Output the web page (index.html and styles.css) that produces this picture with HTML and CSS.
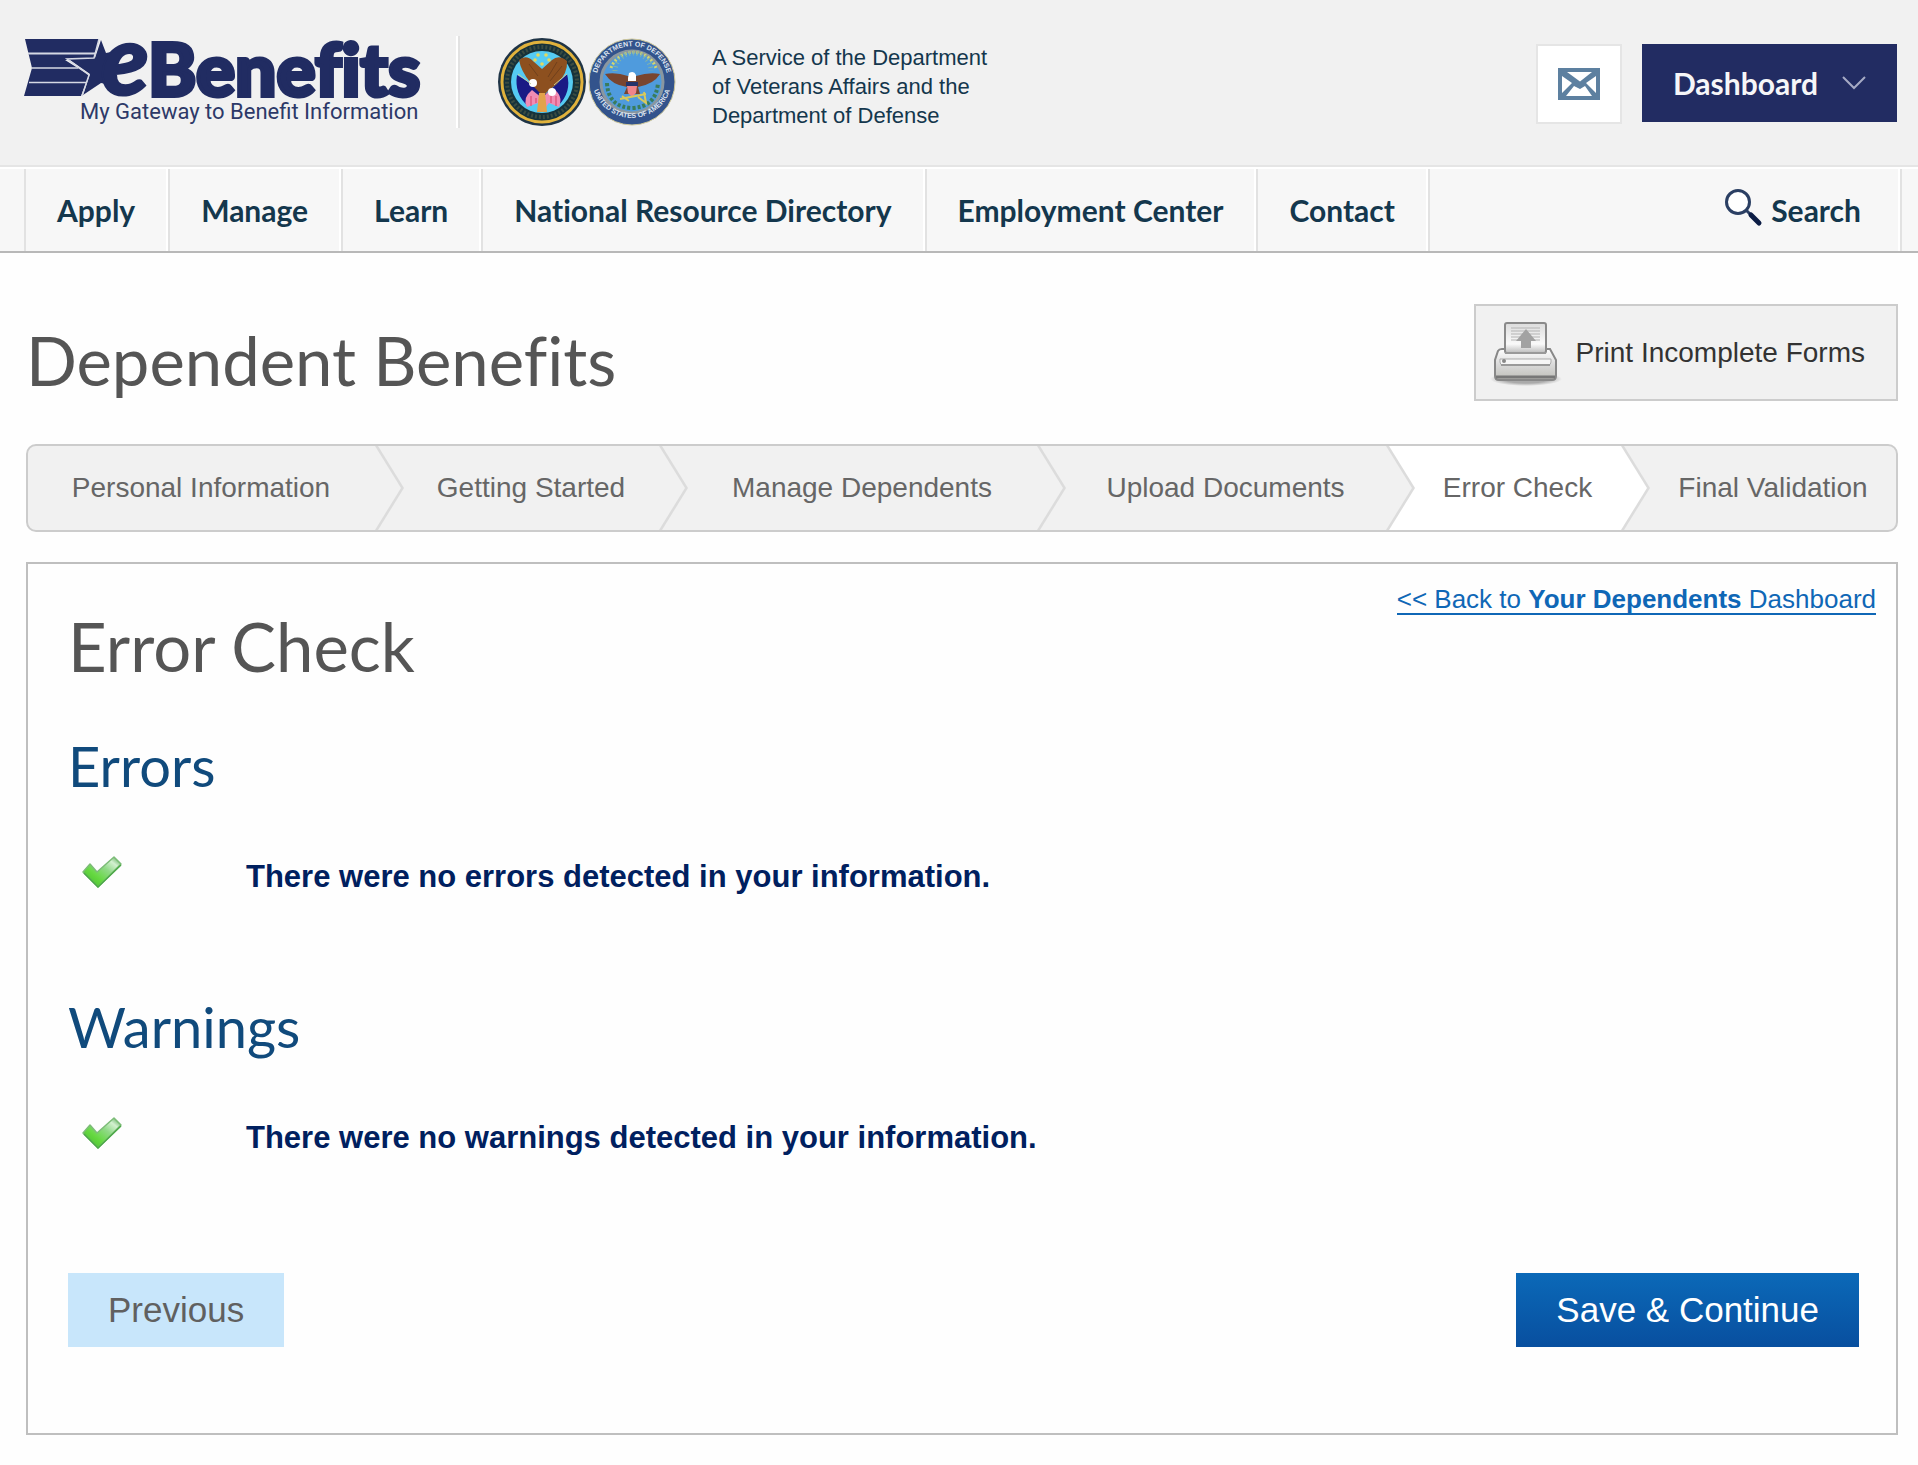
FILE: index.html
```html
<!DOCTYPE html>
<html lang="en">
<head>
<meta charset="utf-8">
<title>eBenefits - Dependent Benefits</title>
<meta name="viewport" content="width=device-width, initial-scale=1">
<link rel="stylesheet" href="styles.css">
</head>
<body>
<header class="masthead">
  <a class="logo" href="#" aria-label="eBenefits home">
    <svg width="400" height="96" viewBox="0 0 400 96">
      <g fill="#212c62">
        <path d="M1 3H75L70 24H41L65 39L57 60H0L8 32Z"/>
        <path d="M77 4L82 17L92 15L84 32L82 48L77 47L59 59L66 38L46 24L71 22Z"/>
        <text class="logo-e" x="77" y="59">e</text>
        <text class="logo-name" x="124" y="60">Benefits</text>
      </g>
      <g stroke="#d5d8e4" fill="none">
        <path d="M4 17.500H72" stroke-width="2"/>
        <path d="M8 32H54M5 46.500H62" stroke-width="1.500"/>
        <path d="M75 3L70 22L43 23L65 39L58 60" stroke-width="1.500"/>
      </g>
      <text class="logo-tag" x="56" y="83">My Gateway to Benefit Information</text>
    </svg>
  </a>
  <div class="agency">
    <svg class="seals" width="182" height="92" viewBox="0 0 182 92" aria-hidden="true">
      <defs>
        <path id="arcTop" d="M102 58A36 36 0 1 1 170 58"/>
        <path id="arcBottom" d="M96 42A40 40 0 1 0 176 42"/>
      </defs>
      <circle cx="46" cy="46" r="44" fill="#1f3446"/>
      <circle cx="46" cy="46" r="40" fill="#17323a" stroke="#e0b23c" stroke-width="3"/>
      <circle cx="46" cy="46" r="35" fill="none" stroke="#3a4c42" stroke-width="4" stroke-dasharray="2 2"/>
      <circle cx="46" cy="46" r="31" fill="#55cbf3"/>
      <path d="M21 39L39 50L50 58L71 38Q76 56 62 70L48 64L32 70Q18 58 21 39Z" fill="#1a1a85"/>
      <path d="M36 54Q26 62 31 71L42 67L46 76L53 67L63 71Q68 59 56 52L46 62Z" fill="#f08cb4"/>
      <path d="M35 60V70M40 62V67M55 59V67M60 60V70" stroke="#dd5a80" stroke-width="1.500"/>
      <path d="M23 24Q30 18 37 25L46 33L56 24Q63 18 71 25Q72 37 61 48L52 55L47 60L39 52L34 46Q25 35 23 24Z" fill="#8d501f"/>
      <path d="M33 28L42 40M61 26L52 41M66 30L54 45" stroke="#70401c"/>
      <circle cx="37" cy="47" r="4" fill="#fff"/><circle cx="56" cy="56" r="4" fill="#fff"/>
      <path d="M22 38L35 48M71 38L58 49" stroke="#c5cd9a" stroke-width="1"/>
      <path d="M43 57H49L51 76H41Z" fill="#e2a34b"/>
      <g fill="#e4d95c"><circle cx="42" cy="19" r="1.800"/><circle cx="50" cy="19" r="1.800"/><circle cx="39" cy="24" r="1.800"/><circle cx="53" cy="24" r="1.800"/><circle cx="46" cy="28" r="1.800"/></g>
      <circle cx="136" cy="46" r="43" fill="#33538c" stroke="#cfc89a" stroke-width="1"/>
      <circle cx="136" cy="46" r="31" fill="#4f9bdd" stroke="#8a97a0" stroke-width="3"/>
      <text class="seal-text"><textPath href="#arcTop" startOffset="50%">DEPARTMENT OF DEFENSE</textPath></text>
      <text class="seal-text"><textPath href="#arcBottom" startOffset="50%">UNITED STATES OF AMERICA</textPath></text>
      <path d="M115 32A24 24 0 0 1 160 32" fill="none" stroke="#d6d66c" stroke-width="3" stroke-dasharray="2 2"/>
      <path d="M119 35A18 18 0 0 1 155 35" fill="none" stroke="#86b4a4" stroke-width="5" stroke-dasharray="1 3"/>
      <path d="M111 47Q112 71 136 72Q160 71 162 47" fill="none" stroke="#397c5c" stroke-width="4" stroke-dasharray="3 2"/>
      <path d="M109 38Q120 36 132 40H140Q153 36 164 38Q158 48 142 51L144 58H128L131 51Q116 49 109 38Z" fill="#79452f"/>
      <path d="M130 46H142V50H130Z" fill="#25346b"/>
      <path d="M131 50H141L140 57L136 61L132 57Z" fill="#ef858b"/>
      <path d="M132 42L133 37Q138 34 140 39V45H132Z" fill="#fff"/>
      <path d="M124 63L150 58M126 60L133 65M142 61L150 67L148 56" stroke="#d9c95a" stroke-width="2" fill="none"/>
    </svg>
    <p class="agency-text">A Service of the Department<br>of Veterans Affairs and the<br>Department of Defense</p>
  </div>
  <div class="account">
    <a class="mail" href="#" aria-label="Messages">
      <svg width="42" height="32" viewBox="0 0 42 32">
        <path fill="#5d80a0" d="M0 0H42V32H0Z"/>
        <path fill="#fff" d="M9 4H34L22 13.500ZM4 8L14 15L4 25ZM38 8L28 15L38 25ZM16 18L22 21L27 18L34 28H8Z"/>
      </svg>
    </a>
    <button class="dashboard" type="button">Dashboard
      <svg width="24" height="14" viewBox="0 0 24 14" aria-hidden="true"><path d="M1 1L12 12L23 1" fill="none" stroke="#a6aac4" stroke-width="2"/></svg>
    </button>
  </div>
</header>

<nav class="main-nav">
  <ul class="nav-list">
    <li><a href="#">Apply</a></li>
    <li><a href="#">Manage</a></li>
    <li><a href="#">Learn</a></li>
    <li><a href="#">National Resource Directory</a></li>
    <li><a href="#">Employment Center</a></li>
    <li><a href="#">Contact</a></li>
  </ul>
  <a class="search" href="#">
    <svg width="38" height="44" viewBox="0 0 38 44" aria-hidden="true">
      <circle cx="13" cy="14" r="11.500" fill="#fff" stroke="#2b3f63" stroke-width="3"/>
      <path d="M21 22L26 27" stroke="#2b3f63" stroke-width="3"/>
      <path d="M26 27L34 35" stroke="#0c1d45" stroke-width="5" stroke-linecap="round"/>
    </svg>Search</a>
</nav>

<main class="page">
  <div class="title-row">
    <h1>Dependent Benefits</h1>
    <button class="print" type="button">
      <svg width="72" height="66" viewBox="0 0 72 66" aria-hidden="true">
        <defs>
          <linearGradient id="paper" x2="0" y2="1"><stop stop-color="#dcdcdc"/><stop offset=".7" stop-color="#fafafa"/><stop offset="1" stop-color="#bbb"/></linearGradient>
          <linearGradient id="tray" x2="0" y2="1"><stop stop-color="#fff"/><stop offset=".5" stop-color="#dadada"/><stop offset="1" stop-color="#bebeb8"/></linearGradient>
          <radialGradient id="shade"><stop offset=".6" stop-color="#aaa"/><stop offset="1" stop-color="#aaa" stop-opacity="0"/></radialGradient>
        </defs>
        <ellipse cx="36" cy="59" rx="36" ry="7" fill="url(#shade)"/>
        <path d="M12 29H60L66 40V56Q66 60 62 60H9Q5 60 5 56V40L8 31Q9 29 12 29Z" fill="url(#tray)" stroke="#888" stroke-width="2"/>
        <path d="M6 57H65" stroke="#777" stroke-width="3"/>
        <rect x="15" y="3" width="41" height="30" rx="2" fill="url(#paper)" stroke="#8a8a8a" stroke-width="2"/>
        <path d="M21 8H50M21 11H50M21 14H50M21 17H50M21 20H50" stroke="#b3b3b3"/>
        <path d="M36 9L46 21H41V28H31V21H26Z" fill="#a2a2a2"/>
        <path d="M15 33H56" stroke="#999" stroke-width="2"/>
        <path d="M10 39H61V42Q61 45 58 45H13Q10 45 10 42Z" fill="#f6f6f6" stroke="#aaa" stroke-width="1"/>
        <path d="M11 45H60" stroke="#9a9a9a" stroke-width="2"/>
        <circle cx="14" cy="41" r="2" fill="#888"/>
      </svg>
      <span>Print Incomplete Forms</span>
    </button>
  </div>

  <ol class="steps">
    <li>Personal Information</li>
    <li>Getting Started</li>
    <li>Manage Dependents</li>
    <li>Upload Documents</li>
    <li class="current" aria-current="step">Error Check</li>
    <li>Final Validation</li>
  </ol>

  <section class="panel">
    <div class="panel-head">
      <h2>Error Check</h2>
      <a class="back" href="#">&lt;&lt; Back to <b>Your Dependents</b> Dashboard</a>
    </div>
    <h3>Errors</h3>
    <div class="result">
      <svg class="tick" width="40" height="36" viewBox="0 0 40 36" aria-hidden="true">
        <defs><linearGradient id="green" x1="0" y1="1" x2="1" y2="0"><stop stop-color="#3fb52c"/><stop offset=".35" stop-color="#65d840"/><stop offset=".6" stop-color="#8fd986"/><stop offset=".8" stop-color="#d3f0d0"/><stop offset="1" stop-color="#3c9a3a"/></linearGradient></defs>
        <path d="M1 17L8 9L15 17L32 2L39 9L16 32Z" fill="url(#green)" stroke="#7cbc77" stroke-width="1.500" stroke-linejoin="round"/>
        <path d="M2 18L16 32L39 10" fill="none" stroke="#4ba847" stroke-width="1.500"/>
      </svg>
      <p>There were no errors detected in your information.</p>
    </div>
    <h3>Warnings</h3>
    <div class="result">
      <svg class="tick" width="40" height="36" viewBox="0 0 40 36" aria-hidden="true">
        <path d="M1 17L8 9L15 17L32 2L39 9L16 32Z" fill="url(#green)" stroke="#7cbc77" stroke-width="1.500" stroke-linejoin="round"/>
        <path d="M2 18L16 32L39 10" fill="none" stroke="#4ba847" stroke-width="1.500"/>
      </svg>
      <p>There were no warnings detected in your information.</p>
    </div>
    <div class="actions">
      <button class="btn previous" type="button">Previous</button>
      <button class="btn save" type="submit">Save &amp; Continue</button>
    </div>
  </section>
</main>
</body>
</html>
```
FILE: styles.css
```css
* { box-sizing: border-box; }

body {
  margin: 0;
  background: #fefefe;
  color: #333;
  font-family: "Liberation Sans", Arial, sans-serif;
  font-size: 28px;
  font-variant-ligatures: none;
}

h1, h2, h3, p, ul, ol { margin: 0; padding: 0; }
h1, h2, h3 { font-family: Lato, sans-serif; font-weight: normal; }
ul, ol { list-style: none; }
a { color: inherit; text-decoration: none; }
button { font: inherit; border: 0; padding: 0; cursor: pointer; }
svg { display: block; flex: none; overflow: visible; }

/* Masthead */
.masthead {
  display: flex;
  align-items: flex-start;
  padding: 36px 21px 37px 24px;
  background: #f1f1f1;
  border-bottom: 2px solid #e5e5e5;
}
.logo {
  width: 436px;
  height: 92px;
  border-right: 2px solid #e2e2e2;
  box-shadow: inset -2px 0 #fff;
}
.logo-name {
  font: 900 73px Lato, sans-serif;
  font-variant-ligatures: none;
  stroke: #212c62;
  stroke-width: 4px;
}
.logo-e {
  font: italic 900 98px Lato, sans-serif;
  stroke: #212c62;
  stroke-width: 2px;
}
.logo-tag { font: 400 22px Roboto, sans-serif; fill: #2d3968; }
.agency {
  display: flex;
  gap: 34px;
  height: 92px;
  padding-left: 36px;
}
.seal-text {
  font: bold 7px "Liberation Sans", sans-serif;
  fill: #dfe5f0;
  text-anchor: middle;
}
.agency-text {
  padding-top: 7px;
  color: #14374d;
  font-size: 22px;
  line-height: 29px;
  white-space: nowrap;
}
.account { display: flex; gap: 20px; margin: 8px 0 0 auto; }
.mail {
  display: grid;
  place-items: center;
  width: 86px;
  height: 80px;
  background: #fff;
  border: 2px solid #e5e5e5;
}
.dashboard {
  display: flex;
  align-items: center;
  gap: 24px;
  height: 78px;
  padding: 0 31px;
  background: #222c62;
  color: #f6f6f8;
  font: bold 30px Lato, sans-serif;
}

/* Main navigation */
.main-nav {
  display: flex;
  justify-content: space-between;
  padding: 0 16px 0 22px;
  background: #f7f7f7;
  border-top: 2px solid #fff;
  border-bottom: 2px solid #b8b8b8;
  color: #14374d;
  font: bold 30px/82px Lato, sans-serif;
  font-variant-ligatures: none;
}
.nav-list { display: flex; }
.nav-list li, .search {
  border-right: 2px solid #e2e2e2;
  box-shadow: inset -2px 0 #fff;
}
.nav-list li:first-child { border-left: 2px solid #e2e2e2; margin-left: 2px; }
.nav-list a { display: block; padding: 0 33px 0 31px; }
.search { display: flex; align-items: center; gap: 8px; padding-right: 39px; }

/* Page */
.page { padding: 51px 20px 30px 26px; }
.title-row {
  display: flex;
  justify-content: space-between;
  align-items: flex-end;
}
h1, h2 { color: #555; font-size: 67px; line-height: 82px; }
.print {
  display: flex;
  align-items: center;
  gap: 14px;
  height: 97px;
  padding: 0 31px 0 14px;
  background: #f1f1f1;
  border: 2px solid #ccc;
  color: #333;
}

/* Progress steps */
.steps {
  display: grid;
  grid-template-columns: 376fr 284fr 378fr 349fr 235fr 246fr;
  margin-top: 43px;
  overflow: hidden;
  background: #f1f1f1;
  border: 2px solid #ccc;
  border-radius: 10px;
  color: #666;
  line-height: 84px;
  text-align: center;
  white-space: nowrap;
}
.steps li { position: relative; padding-right: 30px; }
.steps li:last-child { padding-right: 0; }
.steps li:not(:last-child)::before,
.steps li:not(:last-child)::after {
  content: "";
  position: absolute;
  top: 0;
  right: 0;
  width: 30px;
  height: 84px;
  background: #dcdcdc;
  clip-path: polygon(0 0, 4px 0, 100% 50%, 4px 100%, 0 100%);
}
.steps li:not(:last-child)::after {
  right: 3px;
  background: #f1f1f1;
}
.steps li.current { background: linear-gradient(90deg, #fff calc(100% - 30px), transparent 0); }
.steps li.current:not(:last-child)::after { background: #fff; }
.steps li:has(+ .current) { background: linear-gradient(90deg, transparent calc(100% - 30px), #fff 0); }

/* Panel */
.panel {
  margin-top: 30px;
  padding: 21px 37px 86px 40px;
  border: 2px solid #bfbfbf;
}
.panel-head {
  display: flex;
  justify-content: space-between;
  align-items: flex-start;
  margin-right: -17px;
}
h2 { padding-top: 20px; }
.back {
  color: #0f67b6;
  font-size: 26px;
  line-height: 28px;
  border-bottom: 2px solid;
}
h3 {
  margin-top: 45px;
  color: #104a7c;
  font-size: 56px;
  line-height: 68px;
}
.result + h3 { margin-top: 98px; }
.result {
  display: grid;
  grid-template-columns: 164px 1fr;
  align-items: end;
  margin-top: 55px;
  padding-left: 14px;
}
.tick { margin-bottom: 4px; }
.result p {
  color: #00205f;
  font-size: 31px;
  font-weight: bold;
  line-height: 36px;
}
.actions {
  display: flex;
  justify-content: space-between;
  margin-top: 117px;
}
.btn { height: 74px; padding: 0 40px; font-size: 35px; }
.previous { background: #c8e6fb; color: #606060; }
.save { background: linear-gradient(#0b69b8, #084f9f); color: #fff; }
```
